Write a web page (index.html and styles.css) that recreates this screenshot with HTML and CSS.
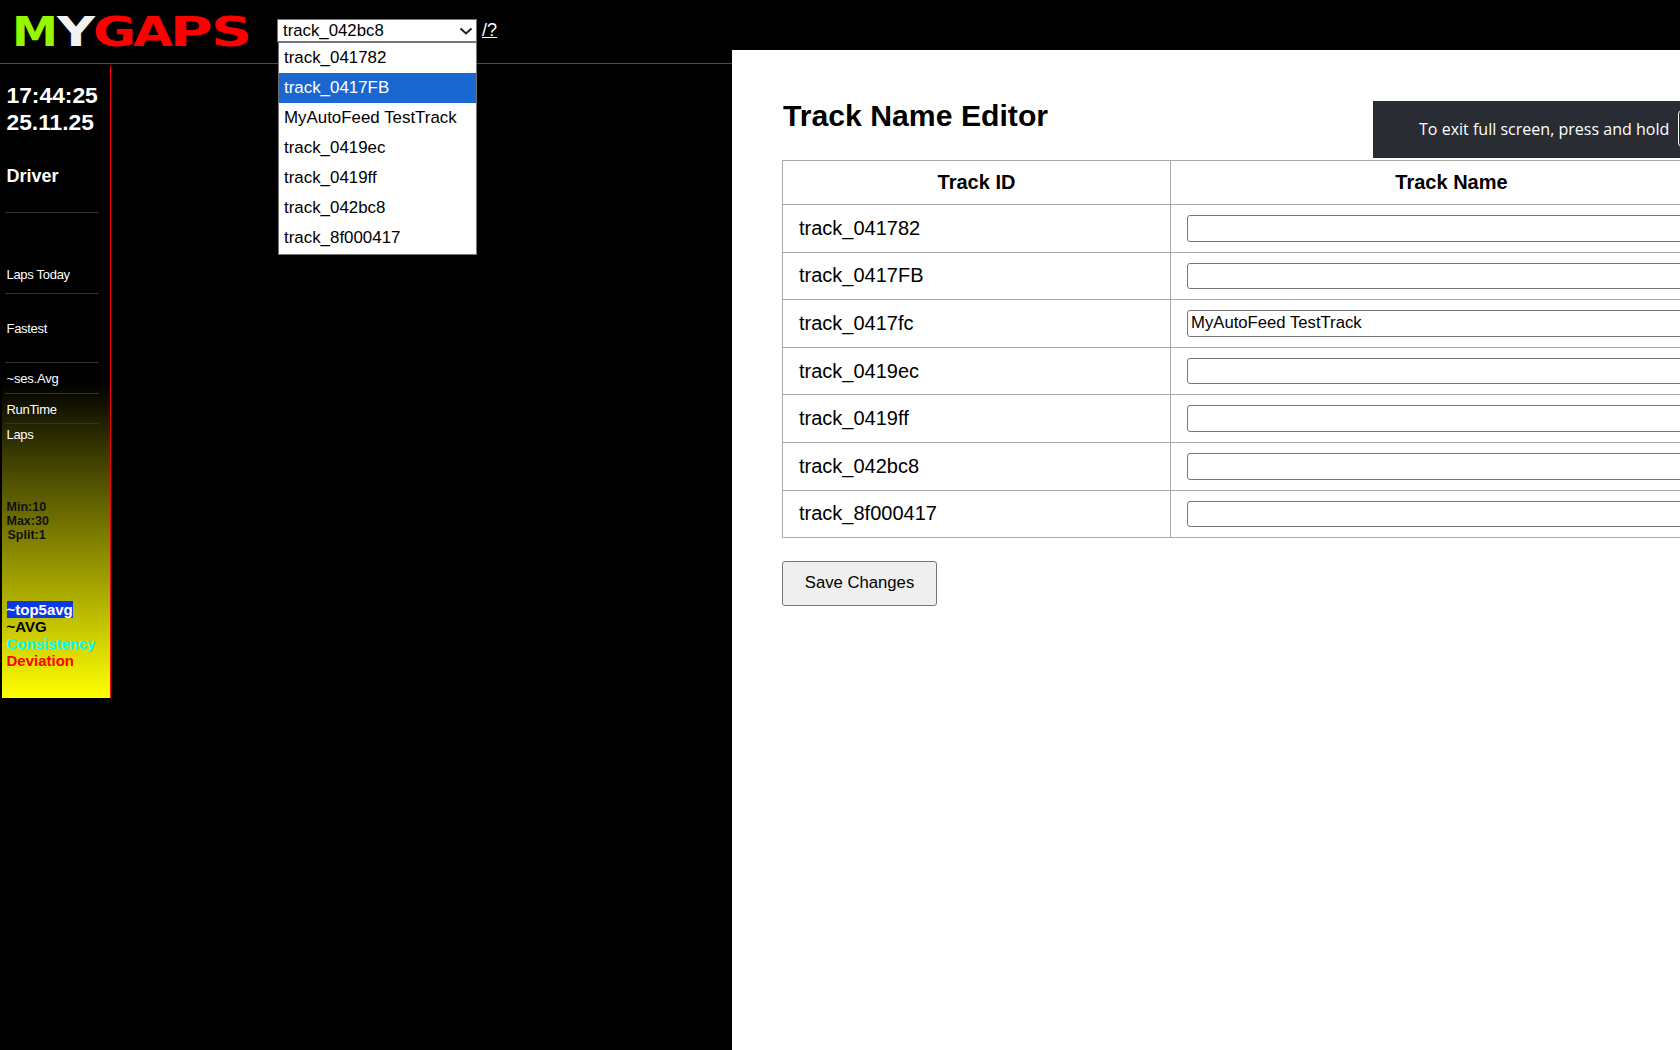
FILE: index.html
```html
<!DOCTYPE html>
<html lang="en">
<head>
<meta charset="utf-8">
<title>MyGaps Track Name Editor</title>
<link rel="stylesheet" href="styles.css">
</head>
<body>
<header class="topbar">
  <svg class="logo" width="254" height="56" viewBox="0 0 254 56" role="img" aria-label="MYGAPS">
    <text class="lg green" x="1" y="43" textLength="46" lengthAdjust="spacingAndGlyphs">M</text>
    <text class="lg white" x="46" y="43" textLength="38" lengthAdjust="spacingAndGlyphs">Y</text>
    <text class="lg red" x="82" y="43" textLength="43" lengthAdjust="spacingAndGlyphs">G</text>
    <text class="lg red" x="122" y="43" textLength="40" lengthAdjust="spacingAndGlyphs">A</text>
    <text class="lg red" x="159" y="43" textLength="43" lengthAdjust="spacingAndGlyphs">P</text>
    <text class="lg red" x="200" y="43" textLength="41" lengthAdjust="spacingAndGlyphs">S</text>
  </svg>
  <select class="track-select">
    <option>track_042bc8</option>
  </select>
  <a class="help" href="#">/?</a>
</header>

<ul class="dropdown">
  <li>track_041782</li>
  <li class="selected">track_0417FB</li>
  <li>MyAutoFeed TestTrack</li>
  <li>track_0419ec</li>
  <li>track_0419ff</li>
  <li>track_042bc8</li>
  <li>track_8f000417</li>
</ul>

<aside class="sidebar">
  <div class="clock">17:44:25<br>25.11.25</div>
  <div class="driver">Driver</div>
  <div class="stat today">Laps Today</div>
  <div class="stat fastest">Fastest</div>
  <div class="stat avg">~ses.Avg</div>
  <div class="stat runtime">RunTime</div>
  <div class="laps">Laps</div>
  <div class="limits">Min:10<br>Max:30<br><span class="split">Split:1</span></div>
  <div class="legend">
    <div class="top5">~top5avg</div>
    <div class="avgline">~AVG</div>
    <div class="consistency">Consistency</div>
    <div class="deviation">Deviation</div>
  </div>
</aside>

<main class="panel">
  <h1>Track Name Editor</h1>
  <table class="tracks">
    <colgroup><col class="col-id"><col class="col-name"></colgroup>
    <thead>
      <tr><th>Track ID</th><th>Track Name</th></tr>
    </thead>
    <tbody>
      <tr><td>track_041782</td><td><input type="text"></td></tr>
      <tr><td>track_0417FB</td><td><input type="text"></td></tr>
      <tr><td>track_0417fc</td><td><input type="text" value="MyAutoFeed TestTrack"></td></tr>
      <tr><td>track_0419ec</td><td><input type="text"></td></tr>
      <tr><td>track_0419ff</td><td><input type="text"></td></tr>
      <tr><td>track_042bc8</td><td><input type="text"></td></tr>
      <tr><td>track_8f000417</td><td><input type="text"></td></tr>
    </tbody>
  </table>
  <button class="save" type="button">Save Changes</button>
</main>

<div class="toast">
  <span>To exit full screen, press and hold</span>
  <span class="key"></span>
</div>
</body>
</html>
```
FILE: styles.css
```css
* { box-sizing: border-box; }
html, body {
  margin: 0;
  height: 100%;
  overflow: hidden;
  background: #000;
  color: #fff;
  font-family: "Liberation Sans", Arial, sans-serif;
}

/* top bar */
.topbar {
  height: 64px;
  border-bottom: 1px solid #f00;
  display: flex;
  align-items: flex-start;
  padding: 3px 0 0 11px;
}
.logo { display: block; flex: none; }
.lg {
  font-family: "DejaVu Sans", sans-serif;
  font-weight: 700;
  font-size: 40px;
}
.green { fill: #94f600; }
.white { fill: #f2f2f2; }
.red { fill: #f00; }

.track-select {
  appearance: none;
  width: 200px;
  height: 23px;
  margin: 16px 0 0 12px;
  padding: 0 0 0 5px;
  font-family: inherit;
  font-size: 16.8px;
  color: #000;
  border: 1px solid #767676;
  border-radius: 0;
  background: #fff url("data:image/svg+xml,%3Csvg xmlns='http://www.w3.org/2000/svg' width='14' height='8' viewBox='0 0 14 8'%3E%3Cpath d='M1.5 1.5 7 6.5l5.5-5' fill='none' stroke='%23222' stroke-width='2'/%3E%3C/svg%3E") no-repeat 181px 7px;
}
.help {
  margin: 16px 0 0 5px;
  color: #fff;
  font-size: 18px;
  line-height: 22px;
}

/* open select list */
.dropdown {
  position: absolute;
  left: 278px;
  top: 42px;
  width: 199px;
  margin: 0;
  padding: 0 0 1px;
  list-style: none;
  background: #fff;
  color: #000;
  border: 1px solid #767676;
  font-size: 16.9px;
}
.dropdown li {
  height: 30px;
  line-height: 30px;
  padding-left: 5px;
  white-space: nowrap;
}
.dropdown .selected {
  background: #1a67d2;
  color: #fff;
}

/* left column */
.sidebar {
  width: 109px;
  height: 632px;
  margin: 2px 0 0 2px;
  padding-left: 3px;
  border-right: 1px solid #f00;
  background: linear-gradient(to bottom, #000 50%, #ff0 100%);
  font-weight: 400;
}
.clock {
  padding: 16px 0 0 1.5px;
  font-size: 22.8px;
  font-weight: 700;
  line-height: 27px;
}
.driver {
  margin: 29px 11px 0 0;
  padding-left: 1.5px;
  height: 48px;
  font-size: 18px;
  font-weight: 700;
  line-height: 22px;
  border-bottom: 1px solid #333;
}
.stat, .laps {
  margin-right: 11px;
  padding-left: 1.5px;
  font-size: 13px;
  letter-spacing: -0.3px;
  line-height: 18px;
}
.stat { border-bottom: 1px solid #333; }
.today { height: 81px; padding-top: 53px; }
.fastest { height: 69px; padding-top: 26px; }
.avg { height: 31px; padding-top: 7px; letter-spacing: -0.2px; }
.runtime { height: 30px; padding-top: 7px; }
.laps { padding-top: 2px; }
.limits {
  margin-top: 57px;
  padding-left: 1.5px;
  color: #111;
  font-size: 12.5px;
  font-weight: 700;
  line-height: 13.9px;
}
.split { margin-left: 1px; }
.legend {
  margin-top: 58px;
  padding-left: 1.5px;
  font-size: 15px;
  font-weight: 700;
  line-height: 17px;
}
.top5 { width: fit-content; background: #0a3ae6; color: #fff; }
.avgline { color: #000; }
.consistency { color: #0ff; }
.deviation { color: #f00; }

/* right white panel */
.panel {
  position: absolute;
  left: 732px;
  top: 50px;
  right: 0;
  bottom: 0;
  overflow: hidden;
  padding: 49px 0 0 50px;
  background: #fff;
  color: #000;
}
.panel h1 {
  margin: 0 0 27px 1px;
  font-size: 30.2px;
  font-weight: 700;
  line-height: 34px;
  white-space: nowrap;
}
.tracks {
  width: 950px;
  table-layout: fixed;
  border-collapse: collapse;
  font-size: 20px;
}
.col-id { width: 388px; }
.col-name { width: 562px; }
.tracks th, .tracks td { border: 1px solid #aaa; }
.tracks th {
  padding: 10px 16px;
  line-height: 23px;
  text-align: center;
}
.tracks td {
  padding: 10px 16px;
  line-height: 23px;
}
.tracks input {
  display: block;
  width: 100%;
  height: 26.6px;
  padding: 1px 3px;
  border: 1px solid #767676;
  border-radius: 3px;
  font-family: inherit;
  font-size: 16.7px;
  color: #000;
  background: #fff;
}
.save {
  display: block;
  width: 155px;
  height: 45px;
  margin-top: 22.5px;
  padding: 0;
  border: 1px solid #767676;
  border-radius: 3px;
  background: #efefef;
  color: #000;
  font-family: inherit;
  font-size: 16.7px;
}

/* browser full-screen notice */
.toast {
  position: absolute;
  left: 1373px;
  top: 101px;
  width: 420px;
  height: 57px;
  display: flex;
  align-items: center;
  gap: 9px;
  padding: 0 0 2px 46px;
  background: #292c33;
  color: #fff;
  font-family: "Open Sans", sans-serif;
  font-size: 16.05px;
  white-space: nowrap;
}
.key {
  display: block;
  width: 60px;
  height: 37px;
  border: 1px solid #fff;
  border-radius: 4px;
}
```
